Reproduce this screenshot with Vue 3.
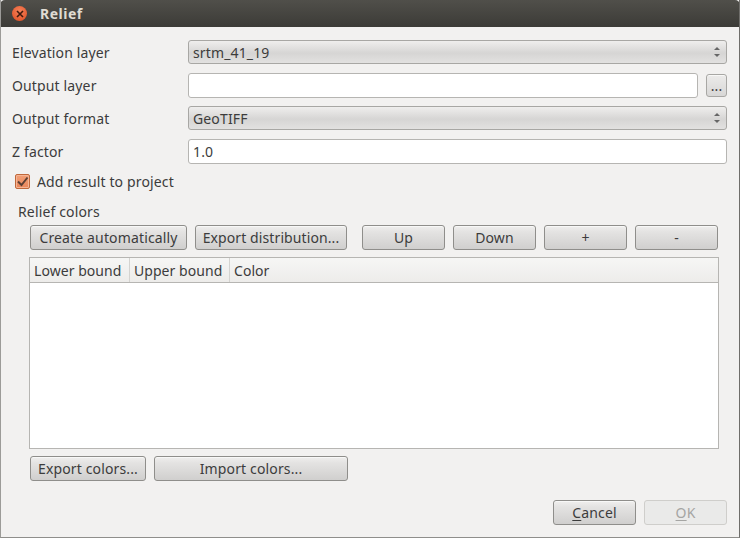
<template>
  <div class="dialog">
    <header class="titlebar">
      <span class="close-btn">
        <svg viewBox="0 0 8 8" width="8" height="8" fill="none" stroke="#3f1a0e" stroke-width="1.6">
          <path d="M1 1 7 7M7 1 1 7"></path>
        </svg>
      </span>
      <span class="title">Relief</span>
    </header>

    <main class="body">
      <div class="form-row combo-row">
        <label>Elevation layer</label>
        <div class="combo">
          <span>srtm_41_19</span>
          <span class="spin"><i class="up"></i><i class="down"></i></span>
        </div>
      </div>
      <div class="form-row output-row">
        <label>Output layer</label>
        <div class="field"></div>
        <button type="button" class="btn dots">...</button>
      </div>
      <div class="form-row format-row">
        <label>Output format</label>
        <div class="combo">
          <span>GeoTIFF</span>
          <span class="spin"><i class="up"></i><i class="down"></i></span>
        </div>
      </div>
      <div class="form-row z-row">
        <label>Z factor</label>
        <div class="field">1.0</div>
      </div>

      <div class="check-row">
        <span class="check">
          <svg viewBox="0 0 15 15" width="15" height="15" fill="none" stroke="#5c4034" stroke-width="2">
            <path d="M3 7.5 6.5 11 12.5 3.5"></path>
          </svg>
        </span>
        <span>Add result to project</span>
      </div>

      <div class="group-title">Relief colors</div>

      <div class="toolbar">
        <button type="button" class="btn create">Create automatically</button>
        <button type="button" class="btn distribution">Export distribution...</button>
        <button type="button" class="btn small up-btn">Up</button>
        <button type="button" class="btn small">Down</button>
        <button type="button" class="btn small">+</button>
        <button type="button" class="btn small">-</button>
      </div>

      <div class="table">
        <div class="thead">
          <div v-for="col in columns" :key="col" class="th">{{ col }}</div>
        </div>
      </div>

      <div class="color-actions">
        <button type="button" class="btn export-colors">Export colors...</button>
        <button type="button" class="btn import-colors">Import colors...</button>
      </div>

      <div class="dialog-actions">
        <button type="button" class="btn action"><span><u>C</u>ancel</span></button>
        <button type="button" class="btn action disabled"><span><u>O</u>K</span></button>
      </div>
    </main>
  </div>
</template>

<script setup>
const columns = ['Lower bound', 'Upper bound', 'Color']
</script>

<style>
html,
body {
  margin: 0;
  background: #fff;
}
</style>

<style scoped>
.dialog {
  width: 740px;
  height: 538px;
  box-sizing: border-box;
  border-left: 1px solid #9c9b98;
  border-right: 1px solid #6f6e6b;
  border-bottom: 1px solid #8f8e8b;
  background: #f2f1f0;
  font-family: "Noto Sans", "Open Sans", sans-serif;
  font-size: 14px;
  letter-spacing: 0.14px;
  color: #3c3c3c;
  overflow: hidden;
}

.titlebar {
  height: 27px;
  margin: 0 -1px;
  display: flex;
  align-items: center;
  padding-left: 12px;
  gap: 13px;
  background: linear-gradient(#504f4a, #3c3b37);
  border-radius: 5px 5px 0 0;
}

.close-btn {
  width: 15px;
  height: 15px;
  border-radius: 50%;
  background: radial-gradient(circle at 50% 35%, #f5825a, #df4b20);
  display: flex;
  align-items: center;
  justify-content: center;
}

.title {
  color: #dfdbd2;
  font-weight: 700;
  font-size: 14px;
  letter-spacing: 0.5px;
}

.body {
  padding: 13px 12px 0 11px;
}

.form-row {
  display: flex;
  align-items: center;
}

.form-row label {
  width: 176px;
  flex-shrink: 0;
}

.combo-row {
  height: 24px;
}

.output-row {
  height: 25px;
  margin-top: 9px;
}

.format-row {
  height: 24px;
  margin-top: 8px;
}

.z-row {
  height: 25px;
  margin-top: 9px;
}

.combo {
  flex: 1;
  height: 24px;
  box-sizing: border-box;
  display: flex;
  align-items: center;
  justify-content: space-between;
  padding: 0 6px 0 4px;
  border: 1px solid #a8a7a4;
  border-radius: 3px;
  background: linear-gradient(#efeeed, #d6d5d4 55%, #e2e1e0);
}

.spin {
  display: flex;
  flex-direction: column;
  gap: 4px;
}

.spin i {
  display: block;
  width: 0;
  height: 0;
  border-left: 3px solid transparent;
  border-right: 3px solid transparent;
}

.spin .up {
  border-bottom: 3px solid #666;
}

.spin .down {
  border-top: 3px solid #666;
}

.field {
  flex: 1;
  height: 25px;
  box-sizing: border-box;
  padding-left: 4px;
  line-height: 24px;
  background: #fff;
  border: 1px solid #b6b5b2;
  border-radius: 3px;
}

.btn {
  box-sizing: border-box;
  height: 25px;
  padding: 0;
  font: inherit;
  letter-spacing: inherit;
  color: #3c3c3c;
  border: 1px solid #8f8e8b;
  border-radius: 3px;
  background: linear-gradient(#f0efee, #e4e3e2 25%, #d0cfce);
  box-shadow: inset 0 1px 0 #f8f8f7;
}

.dots {
  width: 21px;
  height: 23px;
  margin-left: 8px;
  line-height: 18px;
  border-color: #a8a7a4;
  background: linear-gradient(#ecebea, #d8d7d6);
}

.check-row {
  display: flex;
  align-items: center;
  gap: 7px;
  margin-top: 10px;
  height: 15px;
  padding-left: 3px;
}

.check {
  width: 15px;
  height: 15px;
  box-sizing: border-box;
  border: 1px solid #c0683a;
  border-radius: 2px;
  background: linear-gradient(#f2a077, #e9865a);
  box-shadow: inset 0 0 0 1px #f4b596;
  display: flex;
  align-items: center;
  justify-content: center;
}

.check svg {
  flex-shrink: 0;
}

.group-title {
  margin: 13px 0 0 6px;
  height: 23px;
  line-height: 19px;
}

.toolbar {
  display: flex;
  gap: 8px;
  height: 25px;
  margin-left: 18px;
}

.create {
  width: 157px;
}

.distribution {
  width: 152px;
  letter-spacing: 0.1px;
}

.small {
  width: 83px;
}

.up-btn {
  margin-left: 7px;
}

.table {
  height: 192px;
  box-sizing: border-box;
  margin: 7px 8px 0 17px;
  border: 1px solid #b6b5b2;
  background: #fff;
}

.thead {
  display: flex;
  height: 25px;
  box-sizing: border-box;
  border-bottom: 1px solid #b6b5b2;
  background: linear-gradient(#f6f6f5, #edecea);
}

.th {
  width: 100px;
  box-sizing: border-box;
  padding: 1px 0 0 4px;
  line-height: 24px;
  letter-spacing: 0.05px;
  border-right: 1px solid #d4d3d0;
}

.th:last-child {
  flex: 1;
  border-right: none;
}

.color-actions {
  display: flex;
  gap: 8px;
  margin: 7px 0 0 18px;
}

.export-colors {
  width: 116px;
}

.import-colors {
  width: 194px;
}

.dialog-actions {
  display: flex;
  justify-content: flex-end;
  gap: 8px;
  margin-top: 19px;
}

.action {
  width: 83px;
}

.action u {
  text-underline-offset: 2px;
}

.disabled {
  color: #a5a5a3;
  border-color: #cfcecb;
  background: #eaeae9;
  box-shadow: none;
}
</style>
